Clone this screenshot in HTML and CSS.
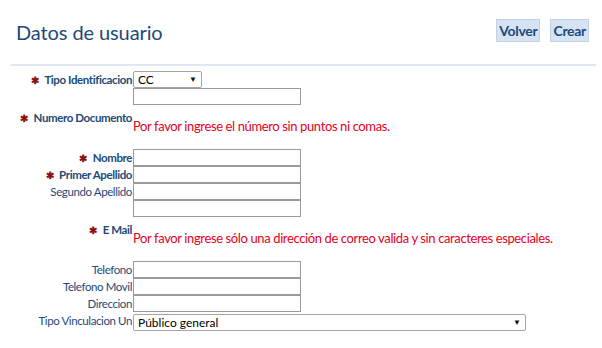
FILE: index.html
```html
<!DOCTYPE html>
<html lang="es">
<head>
    <meta charset="UTF-8">
    <meta name="viewport" content="width=device-width, initial-scale=1.0">
    <title>Datos de usuario</title>
    <link rel="stylesheet" href="styles.css">
</head>
<body>
    <div class="header">
        <h1>Datos de usuario</h1>
        <div class="actions">
            <button class="btn">Volver</button>
            <button class="btn">Crear</button>
        </div>
    </div>

    <form class="form">
        <label class="lbl req"><span class="star">✱</span>Tipo Identificacion</label>
        <div class="field">
            <span class="select-wrap small">
                <select>
                    <option>CC</option>
                    <option>CE</option>
                    <option>TI</option>
                </select>
            </span>
        </div>

        <span class="lbl"></span>
        <div class="field"><input type="text"></div>

        <label class="lbl req top"><span class="star">✱</span>Numero Documento</label>
        <div class="field msg-row"><span class="msg">Por favor ingrese el número sin puntos ni comas.</span></div>

        <label class="lbl req"><span class="star">✱</span>Nombre</label>
        <div class="field"><input type="text"></div>

        <label class="lbl req"><span class="star">✱</span>Primer Apellido</label>
        <div class="field"><input type="text"></div>

        <label class="lbl">Segundo Apellido</label>
        <div class="field"><input type="text"></div>

        <span class="lbl"></span>
        <div class="field"><input type="text"></div>

        <label class="lbl req top"><span class="star">✱</span>E Mail</label>
        <div class="field msg-row"><span class="msg">Por favor ingrese sólo una dirección de correo valida y sin caracteres especiales.</span></div>

        <label class="lbl">Telefono</label>
        <div class="field"><input type="text"></div>

        <label class="lbl">Telefono Movil</label>
        <div class="field"><input type="text"></div>

        <label class="lbl">Direccion</label>
        <div class="field"><input type="text"></div>

        <label class="lbl cut">Tipo Vinculacion Un</label>
        <div class="field last">
            <span class="select-wrap wide">
                <select>
                    <option>Público general</option>
                    <option>Estudiante</option>
                    <option>Docente</option>
                </select>
            </span>
        </div>
    </form>
</body>
</html>
```

FILE: styles.css
```css
body {
    margin: 0;
    font-family: Lato, "Open Sans", sans-serif;
    background-color: #fff;
    color: #1d4a78;
}
.header {
    display: flex;
    justify-content: space-between;
    align-items: flex-start;
    height: 64px;
    margin: 0 6px 0 11px;
    padding: 0 7px 0 5px;
    border-bottom: 2px solid #dde8f3;
}
.header h1 {
    margin: 20px 0 0;
    font-size: 20px;
    font-weight: normal;
    letter-spacing: -0.1px;
    color: #1d4a78;
    line-height: 24px;
}
.actions {
    display: flex;
    gap: 10px;
    margin-top: 19px;
}
.btn {
    height: 23px;
    padding: 0 2px;
    font-family: inherit;
    font-size: 14px;
    font-weight: bold;
    letter-spacing: -0.3px;
    color: #1d4a78;
    background-color: #d5e3f4;
    border: 1px solid #c3d2e4;
    cursor: pointer;
}
.form {
    display: grid;
    grid-template-columns: 133px 1fr;
    margin-top: 5px;
}
.lbl {
    font-size: 11.5px;
    letter-spacing: -0.4px;
    text-align: right;
    line-height: 17px;
    height: 17px;
    white-space: nowrap;
    padding-right: 1px;
}
.lbl.req {
    font-weight: bold;
}
.lbl.top {
    padding-top: 4px;
}
.star {
    color: #8c1212;
    font-size: 10px;
    line-height: 0;
    margin-right: 6px;
}
.field {
    height: 17px;
}
.field.msg-row {
    height: 44px;
}
.field.last {
    height: 19px;
}
.msg {
    display: block;
    padding-top: 13px;
    font-size: 13px;
    letter-spacing: -0.38px;
    line-height: 16px;
    white-space: nowrap;
    color: #e5001f;
}
input[type="text"] {
    display: block;
    box-sizing: border-box;
    width: 168px;
    height: 17px;
    margin: 0;
    border: 1px solid #9a9a9a;
    padding: 0 3px;
    font-family: inherit;
    font-size: 12px;
}
.select-wrap {
    position: relative;
    display: block;
}
.select-wrap select {
    -webkit-appearance: none;
    appearance: none;
    display: block;
    box-sizing: border-box;
    width: 100%;
    height: 17px;
    margin: 0;
    padding: 0 4px;
    border: 1px solid #a4a4a4;
    border-radius: 2px;
    background-color: #fff;
    font-family: inherit;
    font-size: 12px;
    color: #000;
}
.select-wrap::after {
    content: "▼";
    position: absolute;
    right: 5px;
    top: 3px;
    font-size: 8px;
    color: #111;
    pointer-events: none;
}
.select-wrap.small {
    width: 69px;
}
.select-wrap.wide {
    width: 393px;
    margin-top: 2px;
}
```
